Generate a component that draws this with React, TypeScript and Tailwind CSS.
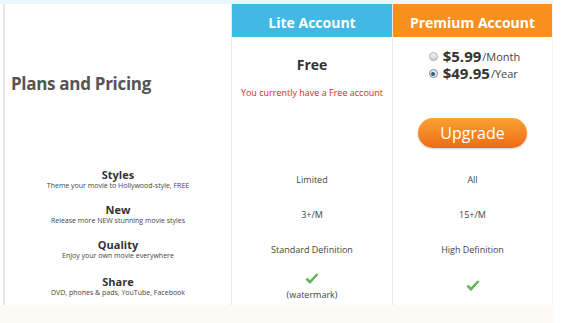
import React from 'react'

type Feature = {
  title: string
  desc: string
  lite: React.ReactNode
  premium: React.ReactNode
}

function Check() {
  return (
    <svg width="14" height="12" viewBox="0 0 14 12" className="mx-auto">
      <path d="M1 6.5 L5 10.5 L13 1.5 L11.5 1 L5 7.8 L2.5 5.2 Z" fill="#5cc44a" stroke="#3f9e34" strokeWidth="0.8" strokeLinejoin="round" />
    </svg>
  )
}

const features: Feature[] = [
  { title: 'Styles', desc: 'Theme your movie to Hollywood-style, FREE', lite: 'Limited', premium: 'All' },
  { title: 'New', desc: 'Release more NEW stunning movie styles', lite: '3+/M', premium: '15+/M' },
  { title: 'Quality', desc: 'Enjoy your own movie everywhere', lite: 'Standard Definition', premium: 'High Definition' },
  {
    title: 'Share',
    desc: 'DVD, phones & pads, YouTube, Facebook',
    lite: (
      <div className="flex flex-col items-center gap-[3px] pt-[3px]">
        <Check />
        <span>(watermark)</span>
      </div>
    ),
    premium: <Check />,
  },
]

export default function App() {
  return (
    <div className="w-[561px] h-[323px] bg-white overflow-hidden text-[#333]" style={{ fontFamily: '"Open Sans", "Noto Sans", sans-serif' }}>
      <div className="w-[553px]">
        <div className="h-[4px] bg-[#eaf6fb]" />
        <div className="flex h-[301px]">
          {/* left column */}
          <div className="ml-[3px] w-[228px] border-l-2 border-[#e6e6e6] flex flex-col">
            <div className="h-[158px] flex items-center pl-[6px] pt-[2px]">
              <h1 className="text-[17px] font-bold text-[#555] tracking-[-0.3px]">Plans and Pricing</h1>
            </div>
            {features.map((f, i) => (
              <div key={f.title} className={`${i === 3 ? 'h-[38px]' : 'h-[35px]'} flex flex-col items-center justify-center`}>
                <div className="text-[11px] font-bold leading-[13px] text-[#333]">{f.title}</div>
                <div className="text-[7px] leading-[10px] text-[#444]">{f.desc}</div>
              </div>
            ))}
          </div>

          {/* lite column */}
          <div className="w-[161px] border-l border-[#e8e8e8] flex flex-col">
            <div className="h-[33px] pt-[3px] bg-[#42b8e4] flex items-center justify-center text-white font-bold text-[14px]">Lite Account</div>
            <div className="h-[125px] flex flex-col items-center pt-[17px]">
              <div className="text-[14px] font-bold text-[#333]">Free</div>
              <div className="mt-[11px] text-[9px] text-[#e8202a]">You currently have a Free account</div>
            </div>
            {features.map((f, i) => (
              <div key={f.title} className={`${i === 3 ? 'h-[38px]' : 'h-[35px]'} flex items-center justify-center text-[9px] text-[#444]`}>
                {f.lite}
              </div>
            ))}
          </div>

          {/* premium column */}
          <div className="w-[161px] border-l border-r border-l-[#e8e8e8] border-r-[#eef6fa] flex flex-col">
            <div className="h-[33px] pt-[3px] bg-[#f7901f] flex items-center justify-center text-white font-bold text-[14px]">Premium Account</div>
            <div className="h-[125px] flex flex-col items-center pt-[11px]">
              <div className="flex flex-col pl-[4px]">
                <label className="flex items-center gap-[5px] h-[17px]">
                  <span className="w-[9px] h-[9px] rounded-full border border-[#aaa] bg-gradient-to-b from-[#f4f4f4] to-[#d4d4d4]" />
                  <span className="text-[15px] leading-[17px] font-bold text-[#333]">$5.99</span>
                  <span className="text-[11px] leading-[17px] text-[#444] -ml-[4px]">/Month</span>
                </label>
                <label className="flex items-center gap-[5px] h-[17px]">
                  <span className="w-[9px] h-[9px] rounded-full border border-[#888] bg-[#e8e8e8] flex items-center justify-center">
                    <span className="w-[4px] h-[4px] rounded-full bg-[#1f5f8a]" />
                  </span>
                  <span className="text-[15px] leading-[17px] font-bold text-[#333]">$49.95</span>
                  <span className="text-[11px] leading-[17px] text-[#444] -ml-[4px]">/Year</span>
                </label>
              </div>
              <button className="mt-[36px] w-[109px] h-[30px] rounded-full bg-gradient-to-b from-[#faa233] to-[#ee6a14] text-white text-[16px] shadow-[0_1px_2px_rgba(0,0,0,0.2)]">
                Upgrade
              </button>
            </div>
            {features.map((f, i) => (
              <div key={f.title} className={`${i === 3 ? 'h-[38px]' : 'h-[35px]'} flex items-center justify-center text-[9px] text-[#444]`}>
                {f.premium}
              </div>
            ))}
          </div>
        </div>
        <div className="h-[18px] bg-[#fdfbf4]" />
      </div>
    </div>
  )
}
